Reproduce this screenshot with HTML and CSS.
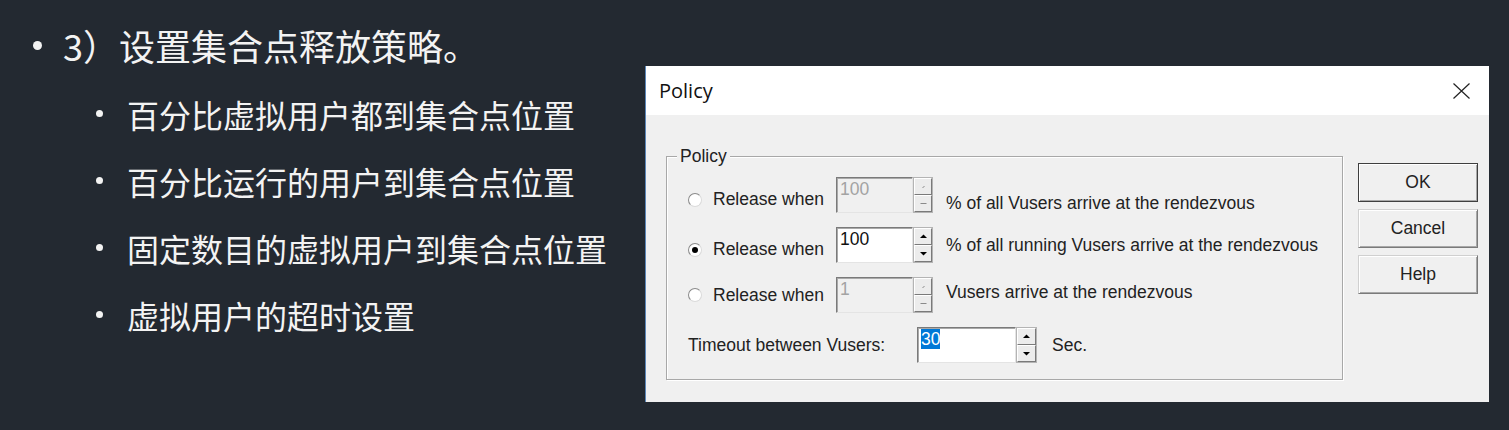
FILE: index.html
```html
<!DOCTYPE html>
<html lang="zh-CN">
<head>
<meta charset="utf-8">
<title>Policy</title>
<link rel="stylesheet" href="styles.css">
</head>
<body>
<div class="slide">
  <ul class="outline">
    <li class="l1"><span class="dot"></span><span>3）设置集合点释放策略。</span></li>
    <li class="l2"><span class="dot"></span><span>百分比虚拟用户都到集合点位置</span></li>
    <li class="l2"><span class="dot"></span><span>百分比运行的用户到集合点位置</span></li>
    <li class="l2"><span class="dot"></span><span>固定数目的虚拟用户到集合点位置</span></li>
    <li class="l2"><span class="dot"></span><span>虚拟用户的超时设置</span></li>
  </ul>

  <div class="dialog">
    <div class="titlebar">
      <span class="title">Policy</span>
      <svg class="close" width="17" height="16" viewBox="0 0 17 16"><path d="M0.5 0.5 L16.5 15.5 M16.5 0.5 L0.5 15.5" stroke="#222" stroke-width="1.2" fill="none"/></svg>
    </div>
    <div class="dbody">
      <div class="group">
        <span class="legend">Policy</span>

        <div class="row">
          <div class="opt"><span class="radio"></span><span class="lbl">Release when</span></div>
          <div class="spin disabled">
            <div class="field">100</div>
            <div class="arrows">
              <span class="abtn"><svg width="7" height="5" viewBox="0 0 7 5"><path d="M2.5 4 L4.5 2" stroke="#8a8a8a" stroke-width="1" fill="none"/></svg></span>
              <span class="abtn"><svg width="7" height="5" viewBox="0 0 7 5"><path d="M0.5 2.5 H6.5" stroke="#8a8a8a" stroke-width="1" fill="none"/></svg></span>
            </div>
          </div>
          <span class="desc low">% of all Vusers arrive at the rendezvous</span>
        </div>

        <div class="row">
          <div class="opt"><span class="radio on"></span><span class="lbl">Release when</span></div>
          <div class="spin">
            <div class="field">100</div>
            <div class="arrows">
              <span class="abtn"><svg width="7" height="5" viewBox="0 0 7 5"><path d="M0 4 L3.5 0.5 L7 4 Z" fill="#000"/></svg></span>
              <span class="abtn"><svg width="7" height="5" viewBox="0 0 7 5"><path d="M0 1 L3.5 4.5 L7 1 Z" fill="#000"/></svg></span>
            </div>
          </div>
          <span class="desc">% of all running Vusers arrive at the rendezvous</span>
        </div>

        <div class="row">
          <div class="opt flat"><span class="radio"></span><span class="lbl">Release when</span></div>
          <div class="spin disabled">
            <div class="field">1</div>
            <div class="arrows">
              <span class="abtn"><svg width="7" height="5" viewBox="0 0 7 5"><path d="M2.5 4 L4.5 2" stroke="#8a8a8a" stroke-width="1" fill="none"/></svg></span>
              <span class="abtn"><svg width="7" height="5" viewBox="0 0 7 5"><path d="M0.5 2.5 H6.5" stroke="#8a8a8a" stroke-width="1" fill="none"/></svg></span>
            </div>
          </div>
          <span class="desc high">Vusers arrive at the rendezvous</span>
        </div>

        <div class="row">
          <span class="tlabel">Timeout between Vusers:</span>
          <div class="spin wide">
            <div class="field"><span class="sel">30</span></div>
            <div class="arrows">
              <span class="abtn"><svg width="7" height="5" viewBox="0 0 7 5"><path d="M0 4 L3.5 0.5 L7 4 Z" fill="#000"/></svg></span>
              <span class="abtn"><svg width="7" height="5" viewBox="0 0 7 5"><path d="M0 1 L3.5 4.5 L7 1 Z" fill="#000"/></svg></span>
            </div>
          </div>
          <span class="sec">Sec.</span>
        </div>
      </div>

      <div class="buttons">
        <div class="btn default">OK</div>
        <div class="btn">Cancel</div>
        <div class="btn">Help</div>
      </div>
    </div>
  </div>
</div>
</body>
</html>
```
FILE: styles.css
```css
html, body {
  margin: 0;
  padding: 0;
}
body {
  background: #232931;
  width: 1509px;
  height: 430px;
  overflow: hidden;
  font-family: "Noto Sans CJK SC", "Noto Sans", sans-serif;
}
.slide {
  display: flex;
  align-items: flex-start;
  height: 430px;
}

/* ---------- left outline ---------- */
.outline {
  list-style: none;
  margin: 0;
  padding: 10px 0 0 0;
  width: 645px;
  flex: none;
  color: #f3f3f3;
  font-family: "Noto Sans CJK SC", "Noto Sans", sans-serif;
}
.l1 {
  display: flex;
  align-items: center;
  height: 70px;
  font-size: 36px;
  padding-left: 33px;
}
.l1 .dot {
  width: 9px;
  height: 9px;
  border-radius: 50%;
  background: #f3f3f3;
  margin-right: 21px;
  flex: none;
}
.l2 {
  display: flex;
  align-items: center;
  height: 67px;
  font-size: 32px;
  padding-left: 96px;
}
.l2 .dot {
  width: 7px;
  height: 7px;
  border-radius: 50%;
  background: #f3f3f3;
  margin-right: 24px;
  flex: none;
}

/* ---------- dialog ---------- */
.dialog {
  margin-top: 66px;
  width: 844px;
  height: 336px;
  flex: none;
  box-sizing: border-box;
  border-left: 1px solid #5b86b8;
  display: flex;
  flex-direction: column;
  font-family: "Liberation Sans", Arial, sans-serif;
  font-size: 17.5px;
  color: #222;
}
.titlebar {
  height: 49px;
  flex: none;
  background: #ffffff;
  display: flex;
  align-items: center;
  justify-content: space-between;
  padding: 0 19px 0 13px;
}
.title {
  font-family: "Open Sans", "Noto Sans", sans-serif;
  font-size: 20px;
  color: #111;
}
.close {
  display: block;
}
.dbody {
  flex: 1;
  background: #f0f0f0;
  display: flex;
  align-items: flex-start;
  padding: 41px 0 0 20px;
  gap: 15px;
}
.group {
  position: relative;
  width: 677px;
  height: 224px;
  flex: none;
  box-sizing: border-box;
  border: 1px solid #a8a8a8;
  box-shadow: inset 1px 1px 0 #ffffff, 1px 1px 0 #ffffff;
  padding: 20px 0 0 21px;
  display: flex;
  flex-direction: column;
  gap: 14px;
}
.legend {
  position: absolute;
  top: -12px;
  left: 10px;
  padding: 0 3px;
  background: #f0f0f0;
  line-height: 22px;
  font-size: 17.5px;
}
.row {
  display: flex;
  align-items: center;
  height: 36px;
}
.opt {
  display: flex;
  align-items: center;
  width: 148px;
  flex: none;
  margin-top: 9px;
}
.opt.flat {
  margin-top: 0;
}
.radio {
  width: 14px;
  height: 14px;
  box-sizing: border-box;
  border-radius: 50%;
  border: 1px solid;
  border-color: #8a8a8a #dadada #dadada #8a8a8a;
  background: #ffffff;
  margin-right: 11px;
  flex: none;
  display: flex;
  align-items: center;
  justify-content: center;
}
.radio.on::after {
  content: "";
  width: 6px;
  height: 6px;
  border-radius: 50%;
  background: #000;
}
.lbl {
  white-space: nowrap;
}
.spin {
  display: flex;
  height: 36px;
  width: 97px;
  flex: none;
}
.spin.wide {
  width: 120px;
}
.field {
  flex: 1;
  box-sizing: border-box;
  border: 1px solid;
  border-color: #7a7a7a #e4e4e4 #e4e4e4 #7a7a7a;
  box-shadow: inset 1px 1px 0 #a9a9a9;
  background: #ffffff;
  padding: 1px 0 0 3px;
  line-height: 20px;
  color: #111;
}
.spin.disabled .field {
  background: #f0f0f0;
  color: #a3a3a3;
}
.sel {
  background: #0078d7;
  color: #ffffff;
}
.arrows {
  width: 20px;
  flex: none;
  display: flex;
  flex-direction: column;
  box-sizing: border-box;
  border: 1px solid #b4b4b4;
}
.spin.wide .arrows {
  width: 21px;
}
.abtn {
  flex: 1;
  box-sizing: border-box;
  border: 1px solid;
  border-color: #ffffff #7a7a7a #7a7a7a #ffffff;
  background: #ececec;
  display: flex;
  align-items: center;
  justify-content: center;
}
.abtn svg {
  display: block;
}
.desc {
  margin-left: 13px;
  white-space: nowrap;
}
.desc.low {
  margin-top: 16px;
}
.desc.high {
  margin-top: -6px;
}
.tlabel {
  width: 229px;
  flex: none;
  white-space: nowrap;
}
.sec {
  margin-left: 15px;
}

.buttons {
  display: flex;
  flex-direction: column;
  gap: 7px;
  margin-top: 7px;
}
.btn {
  width: 120px;
  height: 39px;
  box-sizing: border-box;
  border: 1px solid;
  border-color: #d0d0d0 #7a7a7a #7a7a7a #d0d0d0;
  box-shadow: inset 1px 1px 0 #ffffff, inset -1px -1px 0 #a8a8a8;
  background: #f0f0f0;
  display: flex;
  align-items: center;
  justify-content: center;
  color: #222;
}
.btn.default {
  border-color: #3f3f3f;
}
```
